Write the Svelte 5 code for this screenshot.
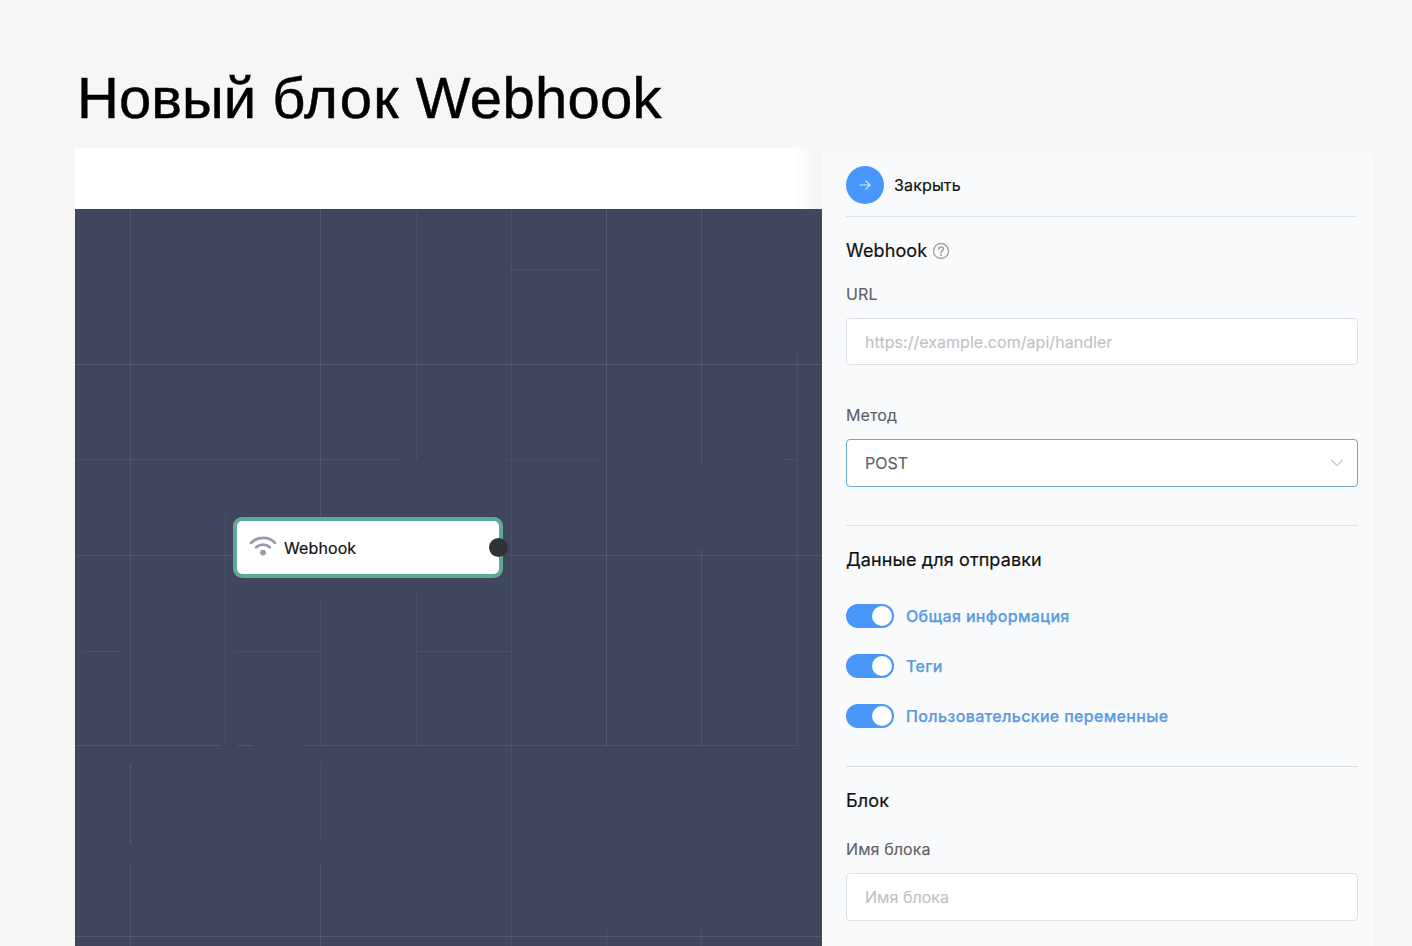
<script>
  const toggles = ['Общая информация', 'Теги', 'Пользовательские переменные'];

  // [position, start, end, opacity] in canvas coordinates
  const vertical = [
    [55, 0, 537, 0.12], [55, 554, 636, 0.12], [55, 653, 737, 0.12],
    [150, 306, 537, 0.07],
    [245, 0, 308, 0.12], [245, 390, 537, 0.08], [245, 553, 633, 0.06], [245, 653, 737, 0.09],
    [341, 2, 251, 0.08], [341, 380, 537, 0.06],
    [436, 0, 737, 0.08],
    [531, 0, 537, 0.12], [531, 719, 737, 0.08],
    [626, 0, 254, 0.1], [626, 340, 537, 0.1], [626, 719, 737, 0.08],
    [722, 143, 537, 0.07]
  ];
  const horizontal = [
    [60, 436, 525, 0.08], [60, 675, 722, 0.03],
    [155, 0, 747, 0.12],
    [250, 0, 325, 0.07], [250, 425, 525, 0.06], [250, 705, 722, 0.08],
    [346, 0, 158, 0.1], [346, 432, 747, 0.09],
    [442, 8, 47, 0.08], [442, 159, 245, 0.07], [442, 339, 440, 0.07],
    [536, 0, 145, 0.12], [536, 163, 179, 0.12], [536, 229, 722, 0.1],
    [727, 0, 747, 0.12]
  ];
</script>

<main class="page">
  <h1><span>Новый</span> <span class="w2">блок</span> <span class="w3">Webhook</span></h1>
  <div class="workspace">
    <section class="editor">
      <div class="topbar"></div>
      <div class="canvas">
        <svg class="grid" width="747" height="737" aria-hidden="true">
          {#each vertical as [x, a, b, o]}
            <rect {x} y={a} width="1" height={b - a} fill="#d5ddff" fill-opacity={o} />
          {/each}
          {#each horizontal as [y, a, b, o]}
            <rect x={a} {y} width={b - a} height="1" fill="#d5ddff" fill-opacity={o} />
          {/each}
        </svg>
        <div class="node">
          <svg width="28" height="20" viewBox="0 0 28 20" fill="none" stroke="#9899b0" stroke-width="2.9" stroke-linecap="round">
            <path d="M2.2 6.7C8.6.3 19.4.3 25.8 6.7" />
            <path d="M7.2 11.2C11 7.7 17 7.7 20.8 11.2" />
            <circle cx="14" cy="16.6" r="2.9" fill="#9899a8" stroke="none" />
          </svg>
          <span class="t-node">Webhook</span>
          <i class="port"></i>
        </div>
      </div>
    </section>

    <aside class="panel">
      <div class="close">
        <button aria-label="Закрыть">
          <svg width="12" height="12" viewBox="0 0 12 12" fill="none" stroke="#d9eaff" stroke-width="1.15" stroke-linecap="round" stroke-linejoin="round">
            <path d="M.8 6H11M6.8 1.8 11 6 6.8 10.2" />
          </svg>
        </button>
        <span class="dark">Закрыть</span>
      </div>

      <div class="group hook">
        <h2><span>Webhook</span>
          <svg width="18" height="18" viewBox="0 0 18 18" fill="none" stroke="#a3a4a6" stroke-width="1.4" stroke-linecap="round">
            <circle cx="9" cy="9" r="7.5" />
            <path d="M6.7 7.3C6.7 4.2 11.4 4.2 11.4 7.1 11.4 8.8 9 8.7 9 10.7" stroke-width="1.6" />
            <circle cx="9" cy="12.9" r="1" fill="#a3a4a6" stroke="none" />
          </svg>
        </h2>
        <div class="label"><span>URL</span></div>
        <div class="field"><span class="ph">https://example.com/api/handler</span></div>
        <div class="label second"><span>Метод</span></div>
        <div class="field active">
          <span>POST</span>
          <svg width="14" height="8" viewBox="0 0 14 8" fill="none" stroke="#c3c6cb" stroke-width="1.2" stroke-linecap="round" stroke-linejoin="round">
            <path d="M1.5 1 7 6.6 12.5 1" />
          </svg>
        </div>
      </div>

      <div class="group data">
        <h2><span>Данные для отправки</span></h2>
        {#each toggles as label}
          <div class="toggle"><i class="switch"></i><span>{label}</span></div>
        {/each}
      </div>

      <div class="group block">
        <h2><span>Блок</span></h2>
        <div class="label"><span>Имя блока</span></div>
        <div class="field"><span class="ph">Имя блока</span></div>
      </div>
    </aside>
  </div>
</main>

<style>
  :global(body) { background: #f6f6f6; overflow: hidden; }
  * { box-sizing: border-box; }
  .page { height: 946px; padding-left: 75px; overflow: hidden; font-family: Inter, sans-serif; color: #111; display: flex; flex-direction: column; background: #f6f6f6; }
  h1 { margin: 0; height: 148px; flex: none; padding: 65px 0 0 2px; font: 400 58px/66px "Liberation Sans", Arial, sans-serif; color: #000; white-space: nowrap; -webkit-text-stroke: .5px #000; }
  .w2 { letter-spacing: 1.2px; }
  .w3 { letter-spacing: .3px; }
  .workspace { display: flex; height: 798px; }
  .editor { width: 747px; flex: none; }
  .topbar { height: 61px; background: linear-gradient(90deg, #fff 0 718px, #f5f6f6 742px); box-shadow: 0 0 2px #fff; }
  .canvas { position: relative; height: 737px; background: #3f465d; }
  .grid { display: block; }
  .node { position: absolute; left: 158px; top: 308px; width: 270px; height: 61px; border: 4px solid #5faa96; border-radius: 9px; background: #fff; display: flex; align-items: center; padding-left: 12px; font-size: 16px; letter-spacing: .1px; -webkit-text-stroke: .2px #111; }
  .node svg { margin-top: -3px; margin-right: 7px; }
  .port { position: absolute; right: -9px; top: 17px; width: 19px; height: 19px; border-radius: 50%; background: #303335; }
  .panel { width: 551px; margin-top: 5px; padding: 0 16px 0 24px; background: #f9fafb; }
  .close { height: 64px; display: flex; align-items: center; gap: 10px; font-size: 16px; letter-spacing: .15px; border-bottom: 1px solid #dde3e8; }
  .dark { -webkit-text-stroke: .2px #111; }
  .close button { width: 38px; height: 38px; padding: 0; border: 0; border-radius: 50%; background: #4a97fb; display: flex; align-items: center; justify-content: center; }
  .group { width: 512px; }
  h2 { margin: 0; font-weight: 400; font-size: 18px; line-height: 24px; letter-spacing: .12px; display: flex; align-items: center; gap: 5px; -webkit-text-stroke: .2px #111; }
  .hook { height: 309px; padding-top: 22px; border-bottom: 1px solid #e1e4e7; }
  .label { font-size: 16px; line-height: 20px; letter-spacing: .1px; color: #5f6165; height: 20px; -webkit-text-stroke: .15px #5f6165; }
  .hook .label { margin: 21px 0 14px; }
  .hook .second { margin-top: 40px; }
  .field { height: 47px; border: 1px solid #dcdfe4; border-radius: 4px; background: #fff; display: flex; align-items: center; justify-content: space-between; padding: 0 13px 0 18px; font-size: 16px; letter-spacing: .04px; color: #606266; -webkit-text-stroke: .15px; }
  .active { height: 48px; border-color: #6ea6d2; }
  .ph { color: #bfc2c8; }
  .data { height: 241px; padding-top: 22px; border-bottom: 1px solid #dadde0; }
  .data h2 { margin-bottom: 19px; }
  .toggle { height: 50px; display: flex; align-items: center; gap: 12px; font-size: 16px; font-weight: 500; letter-spacing: .33px; color: #5b9be0; -webkit-text-stroke: .25px #5b9be0; }
  .switch { width: 48px; height: 24px; border-radius: 12px; background: #4a97fb; padding: 2px; display: flex; justify-content: flex-end; }
  .switch::before { content: ''; width: 20px; height: 20px; border-radius: 50%; background: #fff; }
  .block { padding-top: 22px; }
  .block .label { margin: 26px 0 14px; }
  .block .field { height: 48px; }
  span { white-space: nowrap; }
</style>
